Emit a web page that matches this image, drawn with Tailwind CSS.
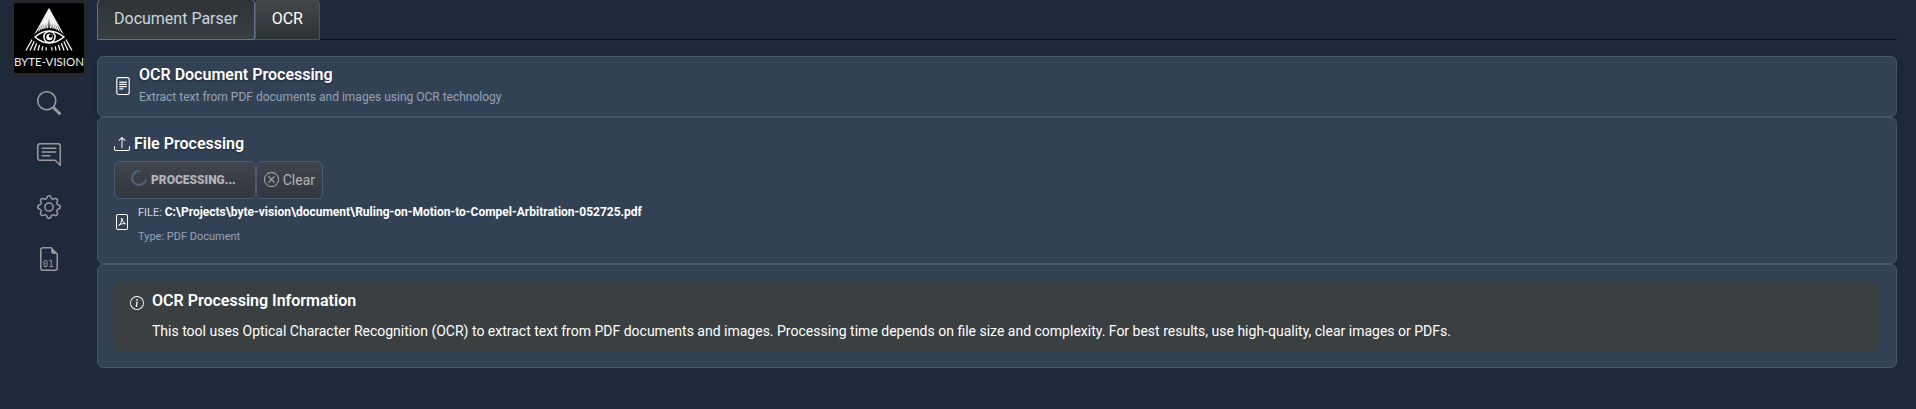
<!DOCTYPE html>
<html lang="en">
<head>
<meta charset="utf-8">
<title>Byte-Vision OCR</title>
<script src="https://cdn.jsdelivr.net/npm/@tailwindcss/browser@4"></script>
</head>
<body class="min-h-screen bg-[#1e293b] font-[Roboto,sans-serif] text-white flex items-start overflow-hidden">
<svg class="hidden">
  <symbol id="file" viewBox="0 0 16 16"><path d="M2 2a2 2 0 0 1 2-2h8a2 2 0 0 1 2 2v12a2 2 0 0 1-2 2H4a2 2 0 0 1-2-2V2zm10-1H4a1 1 0 0 0-1 1v12a1 1 0 0 0 1 1h8a1 1 0 0 0 1-1V2a1 1 0 0 0-1-1z"/></symbol>
  <symbol id="ring" viewBox="0 0 16 16"><path d="M8 15A7 7 0 1 1 8 1a7 7 0 0 1 0 14zm0 1A8 8 0 1 0 8 0a8 8 0 0 0 0 16z"/></symbol>
</svg>
<aside class="w-[97px] shrink-0 pl-[10px]">
  <div class="-mt-px w-[78px] rounded-md border-4 border-[#25282d] bg-black">
    <svg viewBox="0 0 70 70" class="block w-full" role="img" aria-label="Byte-Vision">
      <g stroke="#f2f2f2" stroke-width="1.3" fill="none">
        <path d="M35 6 12 47.500M35 6 16 47.500M35 6 20 47.500M35 6 24 47.500M35 6 28 47.500M35 6 32 47.500M35 6 38 47.500M35 6 42 47.500M35 6 46 47.500M35 6 50 47.500M35 6 54 47.500M35 6 58 47.500"/>
      </g>
      <path d="M20 35Q35 20 50 35Q35 49 20 35Z" fill="#000" stroke="#000" stroke-width="5"/>
      <path d="M21 34Q35 22 50 34Q35 46 21 34Z" fill="#000" stroke="#fff" stroke-width="1.500"/>
      <circle cx="35.500" cy="34" r="5.600" fill="#000" stroke="#fff" stroke-width="1.500"/>
      <circle cx="35.500" cy="34" r="3.200" fill="#fff"/><circle cx="36.500" cy="33" r="1.800" fill="#000"/>
      <text x="35" y="63" text-anchor="middle" font-family="Lato, sans-serif" font-size="11.500" fill="#eee">BYTE-VISION</text>
    </svg>
  </div>
  <nav class="flex w-[78px] flex-col items-center gap-7 pt-[14px] text-[#9a9b9d]">
    <a href="#search" aria-label="Search"><svg class="block size-6" viewBox="0 0 16 16" fill="currentColor"><path d="M11.742 10.344a6.500 6.500 0 1 0-1.397 1.398h-.001c.03.04.062.078.098.115l3.850 3.850a1 1 0 0 0 1.415-1.414l-3.850-3.850a1.007 1.007 0 0 0-.115-.1zM12 6.500a5.500 5.500 0 1 1-11 0 5.500 5.500 0 0 1 11 0z"/></svg></a>
    <a href="#chat" aria-label="Chat"><svg class="block size-6" viewBox="0 0 16 16" fill="currentColor"><path d="M2 1a1 1 0 0 0-1 1v8a1 1 0 0 0 1 1h9.586a2 2 0 0 1 1.414.586l2 2V2a1 1 0 0 0-1-1H2zm12-1a2 2 0 0 1 2 2v12.793a.5.5 0 0 1-.854.353l-2.853-2.853a1 1 0 0 0-.707-.293H2a2 2 0 0 1-2-2V2a2 2 0 0 1 2-2h12z"/><path d="M3 3.500a.5.5 0 0 1 .5-.5h9a.5.5 0 0 1 0 1h-9a.5.5 0 0 1-.5-.5zM3 6a.5.5 0 0 1 .5-.5h9a.5.5 0 0 1 0 1h-9A.5.5 0 0 1 3 6zm0 2.500a.5.5 0 0 1 .5-.5h5a.5.5 0 0 1 0 1h-5a.5.5 0 0 1-.5-.5z"/></svg></a>
    <a href="#settings" aria-label="Settings"><svg class="block size-6" viewBox="0 0 16 16" fill="currentColor"><path d="M8 4.754a3.246 3.246 0 1 0 0 6.492 3.246 3.246 0 0 0 0-6.492zM5.754 8a2.246 2.246 0 1 1 4.492 0 2.246 2.246 0 0 1-4.492 0z"/><path d="M9.796 1.343c-.527-1.790-3.065-1.790-3.592 0l-.094.319a.873.873 0 0 1-1.255.52l-.292-.16c-1.640-.892-3.433.902-2.540 2.541l.159.292a.873.873 0 0 1-.52 1.255l-.319.094c-1.790.527-1.790 3.065 0 3.592l.319.094a.873.873 0 0 1 .52 1.255l-.16.292c-.892 1.640.901 3.434 2.541 2.540l.292-.159a.873.873 0 0 1 1.255.52l.094.319c.527 1.790 3.065 1.790 3.592 0l.094-.319a.873.873 0 0 1 1.255-.52l.292.16c1.640.893 3.434-.902 2.540-2.541l-.159-.292a.873.873 0 0 1 .52-1.255l.319-.094c1.790-.527 1.790-3.065 0-3.592l-.319-.094a.873.873 0 0 1-.52-1.255l.16-.292c.893-1.640-.902-3.433-2.541-2.540l-.292.159a.873.873 0 0 1-1.255-.52l-.094-.319zm-2.633.283c.246-.835 1.428-.835 1.674 0l.094.319a1.873 1.873 0 0 0 2.693 1.115l.291-.16c.764-.415 1.600.42 1.184 1.185l-.159.292a1.873 1.873 0 0 0 1.116 2.692l.318.094c.835.246.835 1.428 0 1.674l-.319.094a1.873 1.873 0 0 0-1.115 2.693l.16.291c.415.764-.42 1.600-1.185 1.184l-.291-.159a1.873 1.873 0 0 0-2.693 1.116l-.094.318c-.246.835-1.428.835-1.674 0l-.094-.319a1.873 1.873 0 0 0-2.692-1.115l-.292.16c-.764.415-1.600-.42-1.184-1.185l.159-.291A1.873 1.873 0 0 0 1.945 8.930l-.319-.094c-.835-.246-.835-1.428 0-1.674l.319-.094A1.873 1.873 0 0 0 3.060 4.377l-.16-.292c-.415-.764.42-1.600 1.185-1.184l.292.159a1.873 1.873 0 0 0 2.692-1.115l.094-.319z"/></svg></a>
    <a href="#binary" aria-label="Binary files"><svg class="block size-6" viewBox="0 0 16 16" fill="currentColor"><path d="M14 4.500V14a2 2 0 0 1-2 2H4a2 2 0 0 1-2-2V2a2 2 0 0 1 2-2h5.500L14 4.500zm-3 0A1.500 1.500 0 0 1 9.500 3V1H4a1 1 0 0 0-1 1v12a1 1 0 0 0 1 1h8a1 1 0 0 0 1-1V4.500h-2z"/><path d="M9.500 1v2A1.500 1.500 0 0 0 11 4.500h2z"/><text x="7.500" y="13.500" text-anchor="middle" font-family="DejaVu Sans Mono, monospace" font-size="6">01</text></svg></a>
  </nav>
</aside>
<main class="min-w-0 flex-1 pr-[19px]">
  <div role="tablist" class="flex h-10 items-end shadow-[inset_0_-1px_0_#0a101b]">
    <button role="tab" aria-selected="false" class="h-[42px] rounded-t-md border border-[#64748b] bg-linear-to-b from-[#2d3236] to-[#3a3f43] px-4 text-base text-[#cbd5e1]">Document Parser</button>
    <button role="tab" aria-selected="true" class="h-[42px] rounded-t-md border border-[#475569] bg-linear-to-b from-[#43484c] to-[#2d3236] px-4 text-base text-white">OCR</button>
  </div>
  <section class="mt-4 flex h-[61px] items-center gap-[7px] rounded-md border border-[#475569] bg-[#334155] px-4 pb-[2px] shadow-[0_2px_8px_#0003]">
    <svg class="size-[18px] shrink-0" viewBox="0 0 16 16" fill="currentColor"><use href="#file"/><path d="M5 4a.5.5 0 0 0 0 1h6a.5.5 0 0 0 0-1H5zm-.5 2.500A.5.5 0 0 1 5 6h6a.5.5 0 0 1 0 1H5a.5.5 0 0 1-.5-.5zM5 8a.5.5 0 0 0 0 1h6a.5.5 0 0 0 0-1H5zm0 2a.5.5 0 0 0 0 1h3a.5.5 0 0 0 0-1H5z"/></svg>
    <div class="pb-[2px]">
      <h1 class="text-base leading-6 font-semibold text-shadow-[0_1px_2px_#0006]">OCR Document Processing</h1>
      <p class="text-xs leading-5 text-[#94a3b8]">Extract text from PDF documents and images using OCR technology</p>
    </div>
  </section>
  <section class="rounded-md border border-[#475569] bg-[#334155] px-4 py-[14px]">
    <h2 class="flex h-6 items-center gap-1 text-base font-semibold text-shadow-[0_1px_2px_#0006]">
      <svg class="size-4" viewBox="0 0 16 16" fill="currentColor"><path d="M.5 9.900a.5.5 0 0 1 .5.5v2.500a1 1 0 0 0 1 1h12a1 1 0 0 0 1-1v-2.500a.5.5 0 0 1 1 0v2.500a2 2 0 0 1-2 2H2a2 2 0 0 1-2-2v-2.500a.5.5 0 0 1 .5-.5z"/><path d="M7.646 1.146a.5.5 0 0 1 .708 0l3 3a.5.5 0 0 1-.708.708L8.500 2.707V11.500a.5.5 0 0 1-1 0V2.707L5.354 4.854a.5.5 0 1 1-.708-.708l3-3z"/></svg>File Processing</h2>
    <div class="mt-[5px] flex text-[#b0b4b9]">
      <button disabled class="flex h-[38px] items-center gap-1 rounded-md border border-[#4b5b74] bg-linear-to-b from-[#40454e] to-[#32363e] pr-[19px] pl-4 text-xs font-black"><svg class="-mt-1 size-4" viewBox="0 0 16 16" fill="none" stroke="#4f627f" stroke-width="2"><path d="M8.500 1A7 7 0 1 0 15 9"/></svg>PROCESSING...</button>
      <button disabled class="flex h-[38px] items-center gap-1 rounded-md border border-[#4b5b74] bg-linear-to-b from-[#40454e] to-[#32363e] px-[7px] text-sm"><svg class="-mt-0.5 size-[15px]" viewBox="0 0 16 16" fill="currentColor"><use href="#ring"/><path d="M4.646 4.646a.5.5 0 0 1 .708 0L8 7.293l2.646-2.647a.5.5 0 0 1 .708.708L8.707 8l2.647 2.646a.5.5 0 0 1-.708.708L8 8.707l-2.646 2.647a.5.5 0 0 1-.708-.708L7.293 8 4.646 5.354a.5.5 0 0 1 0-.708z"/></svg>Clear</button>
    </div>
    <div class="flex items-start gap-2">
      <svg class="mt-[15px] size-4 shrink-0" viewBox="0 0 16 16" fill="currentColor"><use href="#file"/><path fill="none" stroke="currentColor" stroke-linejoin="round" d="M7.800 4.200C8.600 7 9.500 9 11.600 9.800C9 9.300 7 9.800 4.700 11.400C6.800 9.900 7.800 7 7.800 4.200Z"/></svg>
      <div>
        <p class="text-[11px] leading-[26px] text-[#cbd5e1]">FILE: <strong class="text-xs leading-[26px] font-bold text-white">C:\Projects\byte-vision\document\Ruling-on-Motion-to-Compel-Arbitration-052725.pdf</strong></p>
        <p class="pb-px text-[11px] leading-[22px] text-[#94a3b8]">Type: PDF Document</p>
      </div>
    </div>
  </section>
  <section class="rounded-md border border-[#475569] bg-[#334155] p-4">
    <div class="flex gap-2 rounded-md bg-[#3a3f42] px-4 py-2">
      <svg class="mt-[7px] size-[14px] shrink-0" viewBox="0 0 16 16" fill="currentColor"><use href="#ring"/><path d="m8.930 6.588-2.290.287-.082.38.45.083c.294.07.352.176.288.469l-.738 3.468c-.194.897.105 1.319.808 1.319.545 0 1.178-.252 1.465-.598l.088-.416c-.2.176-.492.246-.686.246-.275 0-.375-.193-.304-.533L8.930 6.588zM9 4.500a1 1 0 1 1-2 0 1 1 0 0 1 2 0z"/></svg>
      <div>
        <h2 class="text-base leading-6 font-semibold">OCR Processing Information</h2>
        <p class="mt-[7px] pb-px text-sm leading-[22px]">This tool uses Optical Character Recognition (OCR) to extract text from PDF documents and images. Processing time depends on file size and complexity. For best results, use high-quality, clear images or PDFs.</p>
      </div>
    </div>
  </section>
</main>
</body>
</html>
